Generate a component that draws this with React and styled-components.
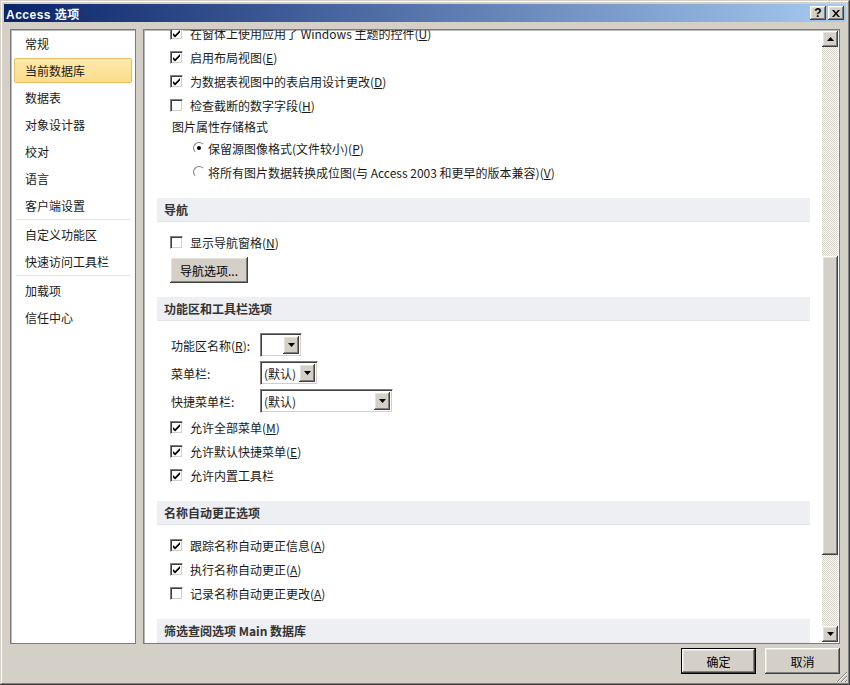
import React from 'react';
import styled, { createGlobalStyle } from 'styled-components';

const GlobalStyle = createGlobalStyle`
  html, body {
    margin: 0;
    padding: 0;
    background: #d4d0c8;
  }
  body {
    width: 850px;
    height: 685px;
    overflow: hidden;
    font-family: "Noto Sans CJK SC", "Noto Sans", sans-serif;
    font-size: 12px;
    color: #1a1a1a;
  }
  u { text-underline-offset: 1px; }
`;

const raised = `
  background: #d4d0c8;
  box-shadow: inset -1px -1px #404040, inset 1px 1px #ffffff,
    inset -2px -2px #808080, inset 2px 2px #e4e1da;
`;

const sunken = `
  border: 1px solid;
  border-color: #808080 #ffffff #ffffff #808080;
  box-shadow: inset 1px 1px #404040, inset -1px -1px #d4d0c8;
`;

const checker = `
  background-color: #ffffff;
  background-image: conic-gradient(#d4d0c8 25%, #ffffff 0 50%, #d4d0c8 0 75%, #ffffff 0);
  background-size: 2px 2px;
`;

const Window = styled.div`
  width: 850px;
  height: 685px;
  box-sizing: border-box;
  padding: 4px;
  display: flex;
  flex-direction: column;
  background: #d4d0c8;
  box-shadow: inset -1px -1px #404040, inset 1px 1px #d4d0c8,
    inset -2px -2px #808080, inset 2px 2px #ffffff;
  position: relative;
`;

const TitleBar = styled.div`
  height: 18px;
  display: flex;
  align-items: center;
  padding: 0 2px;
  background: linear-gradient(to right, #0a246a, #a6caf0);
`;

const Title = styled.div`
  color: #ffffff;
  font-family: "Liberation Sans", "Noto Sans CJK SC", sans-serif;
  font-weight: bold;
  font-size: 12px;
  letter-spacing: 0.5px;
`;

const CaptionButtons = styled.div`
  margin-left: auto;
  display: flex;
  gap: 2px;
`;

const CaptionButton = styled.div`
  ${raised}
  width: 16px;
  height: 14px;
  display: flex;
  align-items: center;
  justify-content: center;
  font-family: "Liberation Sans", sans-serif;
  font-weight: bold;
  font-size: 12px;
  color: #000;
  line-height: 1;
`;

const Main = styled.div`
  display: flex;
  gap: 7px;
  padding: 7px 6px 0 6px;
  height: 615px;
  flex-shrink: 0;
`;

const Panel = styled.div`
  box-sizing: border-box;
  height: 615px;
  border: 1px solid #7c7c7c;
  box-shadow: inset 1px 1px #b8b8b8;
  background: #ffffff;
  overflow: hidden;
`;

const NavPanel = styled(Panel)`
  width: 126px;
  padding: 0 1px;
  display: flex;
  flex-direction: column;
`;

const ContentPanel = styled(Panel)`
  flex: 1;
  display: flex;
`;

const NavItem = styled.div`
  height: 25px;
  margin: 1px 2px;
  box-sizing: border-box;
  display: flex;
  align-items: center;
  flex-shrink: 0;
  padding-left: 10px;
  border-radius: 2px;
  border: 1px solid ${p => (p.$active ? '#e2bd62' : 'transparent')};
  background: ${p => (p.$active ? 'linear-gradient(#fee9ac, #fcdc8b)' : 'transparent')};
`;

const NavSeparator = styled.div`
  height: 2px;
  margin: 0 4px;
  flex-shrink: 0;
  border-top: 1px solid #e2e2e2;
  box-sizing: border-box;
`;

const Scroller = styled.div`
  flex: 1;
  overflow: hidden;
`;

const ScrollInner = styled.div`
  margin-top: -9px;
`;

const CheckRow = styled.div`
  height: 24px;
  display: flex;
  align-items: center;
  padding-left: 26px;
  gap: 7px;
  white-space: nowrap;
`;

const Box = styled.div`
  ${sunken}
  width: 13px;
  height: 13px;
  box-sizing: border-box;
  background: #ffffff;
  display: flex;
  align-items: center;
  justify-content: center;
  flex-shrink: 0;
`;

const GroupLabel = styled.div`
  height: 19px;
  display: flex;
  align-items: center;
  padding-left: 28px;
`;

const RadioRow = styled.div`
  height: 24px;
  display: flex;
  align-items: center;
  padding-left: 49px;
  gap: 3px;
  white-space: nowrap;
`;

const RadioCircle = styled.div`
  width: 12px;
  height: 12px;
  box-sizing: border-box;
  border-radius: 50%;
  border: 1px solid;
  border-color: #808080 #ffffff #ffffff #808080;
  background: #ffffff;
  display: flex;
  align-items: center;
  justify-content: center;
  flex-shrink: 0;
  &::after {
    content: '';
    width: 4px;
    height: 4px;
    border-radius: 50%;
    background: ${p => (p.$checked ? '#000' : 'transparent')};
  }
`;

const SectionHeader = styled.div`
  margin: 14px 12px ${p => p.$after || 8}px 13px;
  height: 24px;
  box-sizing: border-box;
  display: flex;
  align-items: center;
  padding-left: 7px;
  background: #eeeff3;
  border-bottom: 1px solid #e3e5ea;
  font-weight: bold;
  color: #333;
`;

const ButtonRow = styled.div`
  padding-left: 26px;
  margin-top: 3px;
`;

const PushButton = styled.div`
  ${raised}
  width: ${p => p.$w || 75}px;
  height: 26px;
  display: inline-flex;
  align-items: center;
  justify-content: center;
  box-sizing: border-box;
  color: #000;
  ${p =>
    p.$default &&
    `box-shadow: inset 0 0 0 1px #000, inset -2px -2px #404040, inset 2px 2px #ffffff,
      inset -3px -3px #808080, inset 3px 3px #e4e1da;`}
`;

const ComboRow = styled.div`
  height: 28px;
  display: flex;
  align-items: center;
  padding-left: 27px;
`;

const ComboLabel = styled.div`
  width: 89px;
  flex-shrink: 0;
`;

const Combo = styled.div`
  ${sunken}
  width: ${p => p.$w}px;
  height: 24px;
  box-sizing: border-box;
  background: #ffffff;
  display: flex;
  align-items: stretch;
  padding: 2px;
`;

const ComboText = styled.div`
  flex: 1;
  display: flex;
  align-items: center;
  padding-left: 1px;
  overflow: hidden;
  white-space: nowrap;
`;

const DropButton = styled.div`
  ${raised}
  width: 16px;
  display: flex;
  align-items: center;
  justify-content: center;
`;

const ScrollBar = styled.div`
  width: 16px;
  margin: 1px 1px 1px 0;
  ${checker}
  display: flex;
  flex-direction: column;
`;

const ArrowButton = styled.div`
  ${raised}
  height: 16px;
  display: flex;
  align-items: center;
  justify-content: center;
  flex-shrink: 0;
`;

const Thumb = styled.div`
  ${raised}
  height: 299px;
  margin-top: 209px;
  flex-shrink: 0;
`;

const Footer = styled.div`
  display: flex;
  justify-content: flex-end;
  gap: 9px;
  padding: 4px 6px 0 0;
`;

const Grip = styled.svg`
  position: absolute;
  right: 2px;
  bottom: 2px;
`;

function Tri({ down }) {
  return (
    <svg width="7" height="4" viewBox="0 0 7 4">
      <path d={down ? 'M0 0h7L3.5 4z' : 'M0 4h7L3.5 0z'} fill="#000" />
    </svg>
  );
}

function Check({ checked, children }) {
  return (
    <CheckRow>
      <Box>
        {checked && (
          <svg width="9" height="9" viewBox="0 0 9 9">
            <path d="M1 4l2 2 5-5v2.5L3 8.5 1 6.5z" fill="#000" />
          </svg>
        )}
      </Box>
      <span>{children}</span>
    </CheckRow>
  );
}

function Radio({ checked, children }) {
  return (
    <RadioRow>
      <RadioCircle $checked={checked} />
      <span>{children}</span>
    </RadioRow>
  );
}

function ComboField({ label, width, value }) {
  return (
    <ComboRow>
      <ComboLabel>{label}</ComboLabel>
      <Combo $w={width}>
        <ComboText>{value}</ComboText>
        <DropButton>
          <Tri down />
        </DropButton>
      </Combo>
    </ComboRow>
  );
}

const navGroups = [
  ['常规', '当前数据库', '数据表', '对象设计器', '校对', '语言', '客户端设置'],
  ['自定义功能区', '快速访问工具栏'],
  ['加载项', '信任中心'],
];

export default function App() {
  return (
    <>
      <GlobalStyle />
      <Window>
        <TitleBar>
          <Title>Access 选项</Title>
          <CaptionButtons>
            <CaptionButton>?</CaptionButton>
            <CaptionButton>
              <svg width="8" height="7" viewBox="0 0 8 7">
                <path d="M0 0h2l2 2.5L6 0h2L5 3.5 8 7H6L4 4.5 2 7H0l3-3.5z" fill="#000" />
              </svg>
            </CaptionButton>
          </CaptionButtons>
        </TitleBar>

        <Main>
          <NavPanel>
            {navGroups.map((group, gi) => (
              <React.Fragment key={gi}>
                {gi > 0 && <NavSeparator />}
                {group.map(item => (
                  <NavItem key={item} $active={item === '当前数据库'}>
                    {item}
                  </NavItem>
                ))}
              </React.Fragment>
            ))}
          </NavPanel>

          <ContentPanel>
            <Scroller>
              <ScrollInner>
                <Check checked>
                  在窗体上使用应用了 Windows 主题的控件(<u>U</u>)
                </Check>
                <Check checked>
                  启用布局视图(<u>E</u>)
                </Check>
                <Check checked>
                  为数据表视图中的表启用设计更改(<u>D</u>)
                </Check>
                <Check>
                  检查截断的数字字段(<u>H</u>)
                </Check>
                <GroupLabel>图片属性存储格式</GroupLabel>
                <Radio checked>
                  保留源图像格式(文件较小)(<u>P</u>)
                </Radio>
                <Radio>
                  将所有图片数据转换成位图(与 Access 2003 和更早的版本兼容)(<u>V</u>)
                </Radio>

                <SectionHeader>导航</SectionHeader>
                <Check>
                  显示导航窗格(<u>N</u>)
                </Check>
                <ButtonRow>
                  <PushButton $w={78}>导航选项...</PushButton>
                </ButtonRow>

                <SectionHeader $after={10}>功能区和工具栏选项</SectionHeader>
                <ComboField
                  label={<>功能区名称(<u>R</u>):</>}
                  width={42}
                  value=""
                />
                <ComboField label="菜单栏:" width={58} value="(默认)" />
                <ComboField label="快捷菜单栏:" width={133} value="(默认)" />
                <Check checked>
                  允许全部菜单(<u>M</u>)
                </Check>
                <Check checked>
                  允许默认快捷菜单(<u>E</u>)
                </Check>
                <Check checked>允许内置工具栏</Check>

                <SectionHeader>名称自动更正选项</SectionHeader>
                <Check checked>
                  跟踪名称自动更正信息(<u>A</u>)
                </Check>
                <Check checked>
                  执行名称自动更正(<u>A</u>)
                </Check>
                <Check>
                  记录名称自动更正更改(<u>A</u>)
                </Check>

                <SectionHeader>筛选查阅选项 Main 数据库</SectionHeader>
              </ScrollInner>
            </Scroller>
            <ScrollBar>
              <ArrowButton>
                <Tri />
              </ArrowButton>
              <Thumb />
              <div style={{ flex: 1 }} />
              <ArrowButton>
                <Tri down />
              </ArrowButton>
            </ScrollBar>
          </ContentPanel>
        </Main>

        <Footer>
          <PushButton $default>确定</PushButton>
          <PushButton>取消</PushButton>
        </Footer>

        <Grip width="12" height="12" viewBox="0 0 12 12">
          <path d="M11 1L1 11M11 5L5 11M11 9L9 11" stroke="#808080" strokeWidth="1" />
          <path d="M11 2L2 11M11 6L6 11M11 10L10 11" stroke="#ffffff" strokeWidth="1" />
        </Grip>
      </Window>
    </>
  );
}
